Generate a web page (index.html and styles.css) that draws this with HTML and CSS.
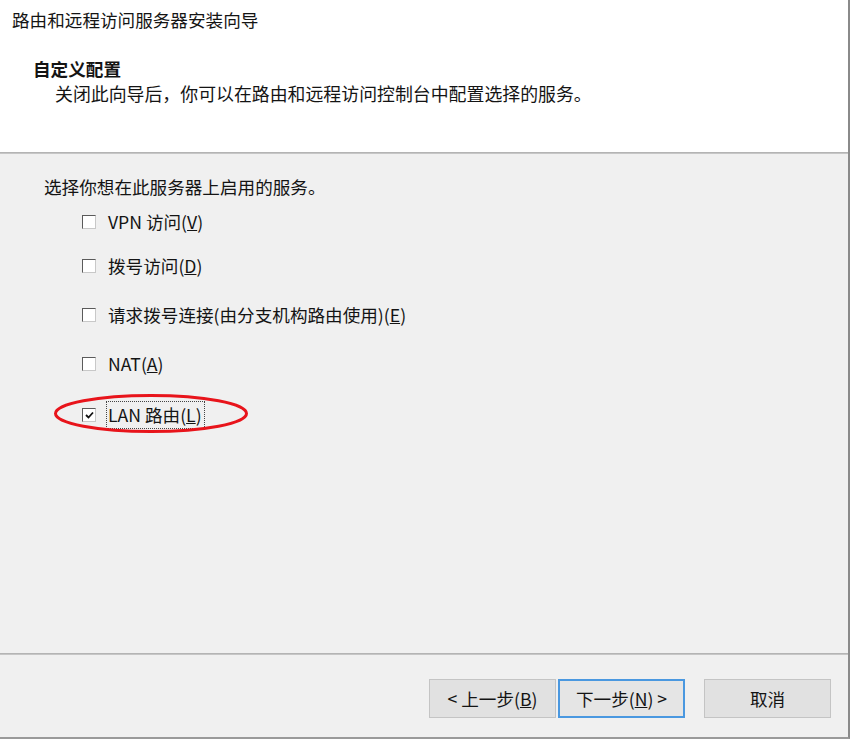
FILE: index.html
```html
<!DOCTYPE html>
<html lang="zh-CN">
<head>
<meta charset="utf-8">
<title>路由和远程访问服务器安装向导</title>
<link rel="stylesheet" href="styles.css">
</head>
<body>
<div class="window">
  <header class="header">
    <div class="title">路由和远程访问服务器安装向导</div>
    <div class="heading">自定义配置</div>
    <div class="subheading">关闭此向导后，你可以在路由和远程访问控制台中配置选择的服务。</div>
  </header>
  <div class="sep"></div>
  <main class="content">
    <div class="intro">选择你想在此服务器上启用的服务。</div>
    <div class="options">
      <label class="opt opt-first"><span class="box"></span><span class="lbl">VPN 访问(<u>V</u>)</span></label>
      <label class="opt"><span class="box"></span><span class="lbl">拨号访问(<u>D</u>)</span></label>
      <label class="opt"><span class="box"></span><span class="lbl">请求拨号连接(由分支机构路由使用)(<u>E</u>)</span></label>
      <label class="opt"><span class="box"></span><span class="lbl">NAT(<u>A</u>)</span></label>
      <label class="opt opt-lan">
        <span class="box checked"><svg width="9" height="8" viewBox="0 0 9 8"><path d="M1 4 L3.5 6.5 L8 1.5" fill="none" stroke="#111" stroke-width="1.8"/></svg></span>
        <span class="lbl focus">LAN 路由(<u>L</u>)</span>
        <svg class="ring" width="200" height="44" viewBox="0 0 200 44"><ellipse cx="98" cy="21.5" rx="95.5" ry="18" fill="none" stroke="#e8141b" stroke-width="3"/></svg>
      </label>
    </div>
  </main>
  <div class="sep"></div>
  <footer class="footer">
    <div class="btn-pair">
      <button class="btn">&lt; 上一步(<u>B</u>)</button>
      <button class="btn btn-default">下一步(<u>N</u>) &gt;</button>
    </div>
    <button class="btn">取消</button>
  </footer>
</div>
</body>
</html>
```
FILE: styles.css
```css
* { box-sizing: border-box; }
html, body {
  margin: 0;
  padding: 0;
  background: #ffffff;
}
body {
  font-family: "Noto Sans CJK SC", "Noto Sans", sans-serif;
  font-size: 17.6px;
  color: #141414;
}
.window {
  width: 850px;
  height: 739px;
  display: flex;
  flex-direction: column;
  background: #f0f0f0;
  border-right: 2px solid #8a8a8a;
  border-bottom: 2px solid #9a9a9a;
}
.header {
  height: 152px;
  background: #ffffff;
  padding: 7px 0 0 12px;
}
.title {
  font-size: 17.6px;
  line-height: 26px;
}
.heading {
  margin: 24px 0 0 21px;
  font-weight: bold;
  font-size: 17.6px;
  line-height: 24px;
}
.subheading {
  margin: 0 0 0 43px;
  font-size: 17.9px;
  line-height: 24px;
}
.sep {
  height: 2px;
  background: #c6c6c6;
  border-top: 1px solid #b4b4b4;
}
.content {
  flex: 1;
  padding: 21px 0 0 44px;
  position: relative;
}
.intro {
  line-height: 24px;
  font-size: 17.6px;
}
.options {
  display: flex;
  flex-direction: column;
  gap: 25px;
  margin: 11px 0 0 38px;
}
.opt {
  display: flex;
  align-items: center;
  height: 24px;
  position: relative;
}
.opt-first { margin-bottom: -5px; }
.opt-lan { top: 2px; }
.box {
  width: 14px;
  height: 14px;
  background: #ffffff;
  border: 1px solid #5a5a5a;
  border-right-color: #c8c8c8;
  border-bottom-color: #c8c8c8;
  display: flex;
  align-items: center;
  justify-content: center;
  margin-right: 12px;
}
.lbl {
  line-height: 24px;
  white-space: nowrap;
}
.focus {
  outline: 1px dotted #444;
  outline-offset: 0;
  padding: 1px 2px 1px 1px;
  margin-left: -1px;
}
.ring {
  position: absolute;
  left: -29px;
  top: -11px;
  pointer-events: none;
}
.footer {
  height: 82px;
  display: flex;
  justify-content: flex-end;
  align-items: flex-start;
  padding: 24px 17px 0 0;
  gap: 19px;
}
.btn-pair {
  display: flex;
  gap: 2px;
}
.btn {
  width: 127px;
  height: 39px;
  font-family: "Noto Sans CJK SC", "Noto Sans", sans-serif;
  font-size: 17.6px;
  color: #141414;
  background: #e1e1e1;
  border: 1px solid #c4c4c4;
  padding: 0;
}
.btn-default {
  border: 2px solid #4a98e0;
  background: #e5e5e5;
}
```
